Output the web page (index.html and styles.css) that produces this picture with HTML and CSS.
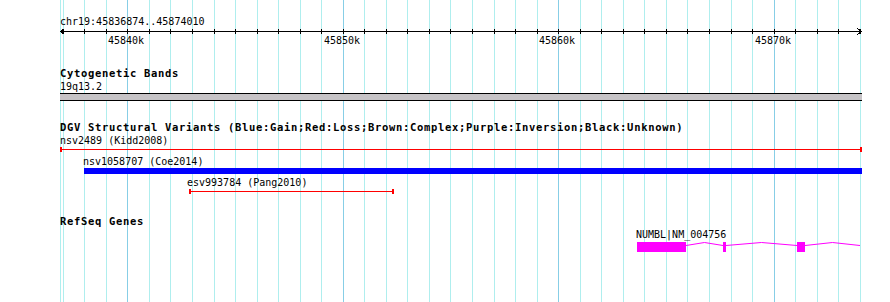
FILE: index.html
```html
<!DOCTYPE html>
<html>
<head>
    <title>chr19:45836874..45874010</title>
    <link rel="stylesheet" href="styles.css">
</head>
<body>
<div class="browser">
    <svg class="grid" id="grid" width="890" height="302"></svg>

    <div class="tracks">
        <div class="ruler">
            <div class="ruler-label">chr19:45836874..45874010</div>
            <svg class="axis" id="axis" width="802" height="6"></svg>
            <div class="ruler-numbers" id="rulerNumbers"></div>
        </div>

        <div class="track track-bands">
            <h2>Cytogenetic Bands</h2>
            <div class="label">19q13.2</div>
            <div class="band" style="width: 802px"></div>
        </div>

        <div class="track track-dgv">
            <h2>DGV Structural Variants (Blue:Gain;Red:Loss;Brown:Complex;Purple:Inversion;Black:Unknown)</h2>
            <div class="variant">
                <div class="label">nsv2489 (Kidd2008)</div>
                <div class="loss" style="width: 802px"></div>
            </div>
            <div class="variant variant-gap3">
                <div class="label" style="margin-left: 23px">nsv1058707 (Coe2014)</div>
                <div class="gain" style="margin-left: 24px; width: 778px"></div>
            </div>
            <div class="variant variant-gap2">
                <div class="label" style="margin-left: 127px">esv993784 (Pang2010)</div>
                <div class="loss" style="margin-left: 129px; width: 205px"></div>
            </div>
        </div>

        <div class="track track-genes">
            <h2>RefSeq Genes</h2>
            <div class="label" style="margin-left: 576px">NUMBL|NM_004756</div>
            <svg class="gene" style="margin-left: 577px" width="225" height="10">
                <rect x="0" y="0" width="49" height="10"></rect>
                <rect x="86" y="0" width="3" height="10"></rect>
                <rect x="160" y="0" width="8" height="10"></rect>
                <polyline points="49,3.5 67.5,0.5 86,3.5"></polyline>
                <polyline points="89,3.5 124.5,0.5 160,3.5"></polyline>
                <polyline points="168,3.5 195.5,0.5 223,3.5"></polyline>
            </svg>
        </div>
    </div>
</div>

<script>
    const START = 45836874;
    const END = 45874010;
    const LEFT = 60;
    const SCALE = 800 / (END - START + 1);
    const NS = "http://www.w3.org/2000/svg";

    function toX(bp) {
        return Math.round(LEFT + (bp - START) * SCALE);
    }

    function addRect(svg, x, y, w, h, cls) {
        const r = document.createElementNS(NS, "rect");
        r.setAttribute("x", x);
        r.setAttribute("y", y);
        r.setAttribute("width", w);
        r.setAttribute("height", h);
        r.setAttribute("class", cls);
        svg.appendChild(r);
    }

    const grid = document.getElementById("grid");
    const axis = document.getElementById("axis");
    const numbers = document.getElementById("rulerNumbers");

    // left edge of the panel
    addRect(grid, LEFT, 0, 1, 302, "minor");

    // axis line with arrow heads on both ends
    addRect(axis, 0, 3, 802, 1, "tick");
    const arrows = document.createElementNS(NS, "path");
    arrows.setAttribute("d", "M4.5 0.5 L0.5 3.5 L4.5 6.5 M797.5 0.5 L801.5 3.5 L797.5 6.5");
    arrows.setAttribute("class", "arrow");
    axis.appendChild(arrows);

    for (let kb = Math.ceil(START / 1000); kb <= Math.floor(END / 1000); kb++) {
        const x = toX(kb * 1000);
        const major = kb % 10 === 0;
        addRect(grid, x, 0, 1, 302, major ? "major" : "minor");
        addRect(axis, x - LEFT, 1, 1, 5, "tick");

        if (major) {
            const span = document.createElement("span");
            span.textContent = kb + "k";
            span.style.left = (x - LEFT - 19) + "px";
            numbers.appendChild(span);
        }
    }
</script>
</body>
</html>
```

FILE: styles.css
```css
body {
    margin: 0;
    background-color: #ffffff;
    color: #000000;
    font-family: "DejaVu Sans Mono", "Liberation Mono", monospace;
    font-size: 10px;
    line-height: 13px;
}

.browser {
    position: relative;
    width: 890px;
    height: 302px;
    overflow: hidden;
}

.grid {
    position: absolute;
    top: 0;
    left: 0;
    shape-rendering: crispEdges;
}

.grid .minor {
    fill: #afeeee;
}

.grid .major {
    fill: #87cee6;
}

.tracks {
    position: relative;
    padding: 15px 0 0 60px;
}

/* ruler */
.ruler-label {
    white-space: nowrap;
}

.axis {
    display: block;
    overflow: visible;
    shape-rendering: crispEdges;
}

.axis .tick {
    fill: #000000;
}

.axis .arrow {
    fill: none;
    stroke: #000000;
    stroke-width: 1;
}

.ruler-numbers {
    position: relative;
    height: 13px;
}

.ruler-numbers span {
    position: absolute;
    top: 0;
}

/* tracks */
.track h2 {
    margin: 0;
    font-size: 10.5px;
    font-weight: bold;
    letter-spacing: 0.68px;
    line-height: 13px;
    white-space: nowrap;
}

.track-bands {
    margin-top: 20px;
}

.track-dgv {
    margin-top: 20px;
}

.track-genes {
    margin-top: 21px;
}

.label {
    white-space: nowrap;
}

.band {
    box-sizing: border-box;
    height: 8px;
    background-color: #c6c3c6;
    border-top: 1px solid #000000;
    border-bottom: 1px solid #000000;
}

.variant-gap3 {
    margin-top: 3px;
}

.variant-gap2 {
    margin-top: 2px;
}

.loss {
    box-sizing: border-box;
    height: 5px;
    border-left: 2px solid #ff0000;
    border-right: 2px solid #ff0000;
    background: linear-gradient(#ff0000, #ff0000) center / 100% 1px no-repeat;
}

.gain {
    height: 6px;
    background-color: #0000ff;
}

.gene {
    display: block;
    margin-top: 1px;
    overflow: visible;
}

.gene rect {
    fill: #ff00ff;
    shape-rendering: crispEdges;
}

.gene polyline {
    fill: none;
    stroke: #ff00ff;
    stroke-width: 1;
}
```
